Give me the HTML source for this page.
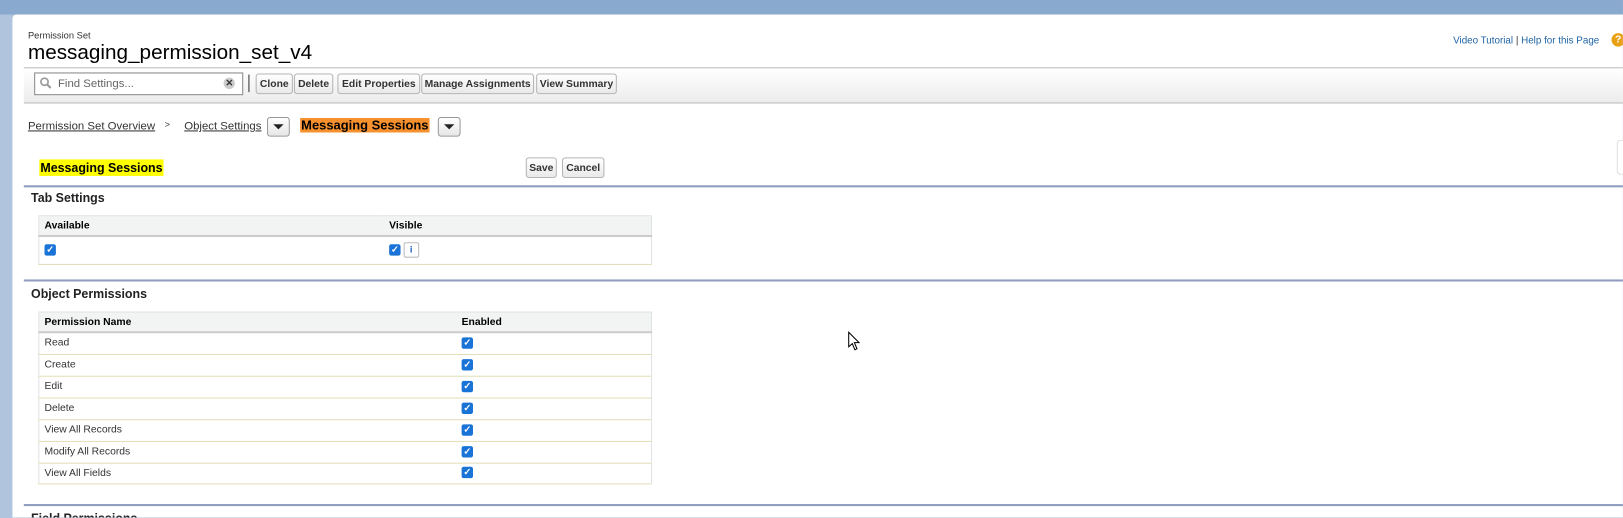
<!DOCTYPE html>
<html style="overflow:hidden;width:1623px;height:518px"><head><style>
body{margin:0;width:1623px;height:518px;overflow:hidden;background:#b0c4de;font-family:"Liberation Sans",Arial,sans-serif;position:relative}
#w{position:absolute;left:0;top:0;width:1568px;height:500px;overflow:hidden;transform:scale(1.035);transform-origin:0 0}
.a{position:absolute}
.top{left:0;top:0;width:1623px;height:14px;background:#8aa9cf}
.panel{left:12px;top:14px;width:1611px;height:500px;background:#fff;border-radius:4px 0 0 0}
.btn{position:absolute;top:72px;height:18px;border:1px solid #b5b5b5;border-radius:3px;background:linear-gradient(#fff,#e9e9e9);font-size:10px;font-weight:bold;color:#333;line-height:19px;text-align:center;box-sizing:content-box}
.rule{left:23px;right:0;height:2px;background:#8e9dbf}
.h3{font-size:12px;font-weight:bold;color:#222}
table{position:absolute;border-collapse:collapse;font-size:10px;color:#333}
td,th{padding:0 0 0 5px;text-align:left;vertical-align:middle}
th{background:#f2f3f3;font-weight:bold;color:#000;height:18px;border-bottom:2px solid #ccc;border-top:1px solid #e0e3e5}
.cb{display:inline-block;width:11px;height:11px;background:#1a73d6;border-radius:2px;color:#fff;font-size:9px;line-height:11px;text-align:center;font-weight:bold;vertical-align:middle}
.link{color:#333;text-decoration:underline;font-size:11px}
.dd{position:absolute;width:20px;height:17px;border:1px solid #999;border-radius:3px;background:linear-gradient(#fff,#e6e6e6)}
.dd:after{content:"";position:absolute;left:5px;top:6px;border-left:5px solid transparent;border-right:5px solid transparent;border-top:5px solid #222}
</style></head><body>
<div id="w">
<div class="a top"></div>
<div class="a panel"></div>
<div class="a" style="left:27px;top:29px;font-size:9px;color:#333">Permission Set</div>
<div class="a" style="left:27px;top:40px;font-size:20px;color:#000">messaging_permission_set_v4</div>
<div class="a" style="left:1404px;top:34px;font-size:9.5px;color:#1f63a4">Video Tutorial <span style="color:#333">|</span> Help for this Page</div>
<div class="a" style="left:1557px;top:32px;width:13px;height:13px;border-radius:50%;background:#e8a015;color:#fff;font-size:10px;font-weight:bold;text-align:center;line-height:13px">?</div>
<div class="a" style="left:23px;top:65px;right:-40px;height:33px;border-top:1px solid #bbb;border-bottom:1px solid #bbb;background:linear-gradient(#fff,#ececec)"></div>
<div class="a" style="left:33px;top:70px;width:200px;height:20px;border:1px solid #888;background:#fff"></div>
<svg class="a" style="left:38px;top:74px" width="12" height="12"><circle cx="5" cy="5" r="3.5" fill="none" stroke="#999" stroke-width="1.6"/><line x1="7.5" y1="7.5" x2="11" y2="11" stroke="#999" stroke-width="2"/></svg>
<div class="a" style="left:56px;top:75px;font-size:11px;color:#666">Find Settings...</div>
<div class="a" style="left:216px;top:75px;width:11px;height:11px;border-radius:50%;background:#ccc;color:#333;font-size:9px;line-height:11px;text-align:center;font-weight:bold">✕</div>
<div class="a" style="left:240px;top:72px;width:1px;height:17px;background:#333"></div>
<div class="btn" style="left:247px;top:71px;width:34px">Clone</div>
<div class="btn" style="left:284px;top:71px;width:36px">Delete</div>
<div class="btn" style="left:326px;top:71px;width:78px">Edit Properties</div>
<div class="btn" style="left:407px;top:71px;width:107px">Manage Assignments</div>
<div class="btn" style="left:518px;top:71px;width:76px">View Summary</div>
<div class="a link" style="left:27px;top:116px">Permission Set Overview</div>
<div class="a" style="left:159px;top:115px;font-size:9px;color:#333">&gt;</div>
<div class="a link" style="left:178px;top:116px">Object Settings</div>
<div class="dd" style="left:258px;top:113px"></div>
<div class="a" style="left:290px;top:114px;font-size:12.5px;font-weight:bold;background:#f7912e;color:#000;padding:0 1px">Messaging Sessions</div>
<div class="dd" style="left:423px;top:113px"></div>
<div class="a" style="left:38px;top:154px;font-size:12px;font-weight:bold;background:#ffff00;padding:1px 1px">Messaging Sessions</div>
<div class="btn" style="left:508px;top:152px;width:28px">Save</div>
<div class="btn" style="left:543px;top:152px;width:39px">Cancel</div>
<div class="a rule" style="top:179px;right:-40px"></div>
<div class="a h3" style="left:30px;top:184px">Tab Settings</div>
<table style="left:37px;top:208px;width:593px;border:1px solid #e0e3e5">
<tr><th style="width:328px">Available</th><th>Visible</th></tr>
<tr style="height:27px;border-bottom:1px solid #e3deb8"><td><span class="cb">✓</span></td><td><span class="cb">✓</span> <span style="display:inline-block;width:13px;height:13px;border:1px solid #bbb;border-radius:2px;color:#1a5fb4;font-size:9px;text-align:center;line-height:13px;vertical-align:middle;font-weight:bold">i</span></td></tr>
</table>
<div class="a rule" style="top:270px;right:-40px"></div>
<div class="a h3" style="left:30px;top:277px">Object Permissions</div>
<table style="left:37px;top:301px;width:593px;border:1px solid #e0e3e5">
<tr><th style="width:398px">Permission Name</th><th>Enabled</th></tr>
<tr style="height:21px;border-bottom:1px solid #e3deb8"><td>Read</td><td><span class="cb">✓</span></td></tr>
<tr style="height:21px;border-bottom:1px solid #e3deb8"><td>Create</td><td><span class="cb">✓</span></td></tr>
<tr style="height:21px;border-bottom:1px solid #e3deb8"><td>Edit</td><td><span class="cb">✓</span></td></tr>
<tr style="height:21px;border-bottom:1px solid #e3deb8"><td>Delete</td><td><span class="cb">✓</span></td></tr>
<tr style="height:21px;border-bottom:1px solid #e3deb8"><td>View All Records</td><td><span class="cb">✓</span></td></tr>
<tr style="height:21px;border-bottom:1px solid #e3deb8"><td>Modify All Records</td><td><span class="cb">✓</span></td></tr>
<tr style="height:20px;border-bottom:1px solid #e3deb8"><td>View All Fields</td><td><span class="cb">✓</span></td></tr>
</table>
<div class="a rule" style="top:487px;right:-40px"></div>
<div class="a h3" style="left:30px;top:494px">Field Permissions</div>
<div class="a" style="left:1562px;top:135px;width:10px;height:32px;border:1px solid #ddd;border-right:none;border-radius:4px 0 0 4px;background:#fff"></div>
<svg class="a" style="left:819px;top:320px" width="12" height="20"><path d="M1 1 L1 15 L4.5 12 L7 18 L9 17 L6.5 11 L11 11 Z" fill="#fff" stroke="#000" stroke-width="1"/></svg>
</div>
</body></html>
